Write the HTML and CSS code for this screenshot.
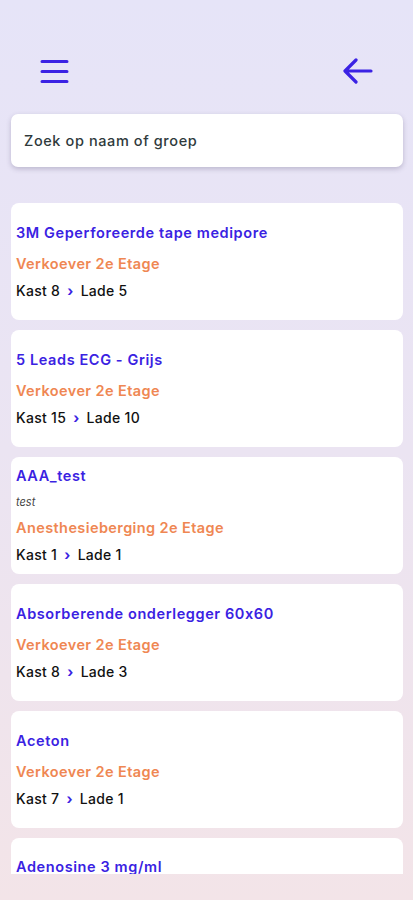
FILE: index.html
```html
<!DOCTYPE html>
<html lang="nl">
<head>
    <meta charset="UTF-8">
    <meta name="viewport" content="width=device-width, initial-scale=1.0">
    <title>Materialen</title>
    <link rel="stylesheet" href="styles.css">
</head>
<body>

    <!-- Top bar -->
    <header class="top-bar">
        <button class="icon-btn" aria-label="Menu">
            <svg width="29" height="25" viewBox="0 0 29 25">
                <path d="M2 2.5h25M2 12.5h25M2 22.5h25" stroke="#3b22e4" stroke-width="3" stroke-linecap="round" fill="none"/>
            </svg>
        </button>
        <button class="icon-btn" aria-label="Terug">
            <svg width="30" height="26" viewBox="0 0 30 26">
                <path d="M28 13H3M13 2L2 13l11 11" stroke="#3b22e4" stroke-width="3.2" stroke-linecap="round" stroke-linejoin="round" fill="none"/>
            </svg>
        </button>
    </header>

    <div class="search-box">Zoek op naam of groep</div>

    <main class="item-list">
        <div class="item-card">
            <p class="item-name">3M Geperforeerde tape medipore</p>
            <p class="item-desc empty"></p>
            <p class="item-place">Verkoever 2e Etage</p>
            <p class="item-loc">Kast 8 <span class="chev">&rsaquo;</span> Lade 5</p>
        </div>
        <div class="item-card">
            <p class="item-name">5 Leads ECG - Grijs</p>
            <p class="item-desc empty"></p>
            <p class="item-place">Verkoever 2e Etage</p>
            <p class="item-loc">Kast 15 <span class="chev">&rsaquo;</span> Lade 10</p>
        </div>
        <div class="item-card">
            <p class="item-name">AAA_test</p>
            <p class="item-desc">test</p>
            <p class="item-place">Anesthesieberging 2e Etage</p>
            <p class="item-loc">Kast 1 <span class="chev">&rsaquo;</span> Lade 1</p>
        </div>
        <div class="item-card">
            <p class="item-name">Absorberende onderlegger 60x60</p>
            <p class="item-desc empty"></p>
            <p class="item-place">Verkoever 2e Etage</p>
            <p class="item-loc">Kast 8 <span class="chev">&rsaquo;</span> Lade 3</p>
        </div>
        <div class="item-card">
            <p class="item-name">Aceton</p>
            <p class="item-desc empty"></p>
            <p class="item-place">Verkoever 2e Etage</p>
            <p class="item-loc">Kast 7 <span class="chev">&rsaquo;</span> Lade 1</p>
        </div>
        <!-- last card is cut off by the bottom of the list -->
        <div class="item-card partial">
            <p class="item-name">Adenosine 3 mg/ml</p>
        </div>
    </main>

</body>
</html>
```

FILE: styles.css
```css
html, body {
    height: 100%;
}

body {
    margin: 0;
    overflow: hidden;
    font-family: Inter, "Noto Sans", sans-serif;
    font-feature-settings: "calt" 0;
    background: linear-gradient(180deg, #e6e4f8 0%, #ebe4f2 50%, #f3e4e8 100%);
}

.top-bar {
    display: flex;
    justify-content: space-between;
    align-items: center;
    padding: 58px 40px 0 40px;
    height: 26px;
}

.icon-btn {
    background: none;
    border: none;
    padding: 0;
    display: flex;
}

.search-box {
    margin: 30px 10px 0 11px;
    height: 53px;
    background: #fff;
    border-radius: 7px;
    box-shadow: 0 2px 5px rgba(60, 50, 90, 0.25);
    display: flex;
    align-items: center;
    padding-left: 13px;
    font-size: 14.5px;
    font-weight: 500;
    letter-spacing: 0.6px;
    color: #2f3a3c;
}

.item-list {
    display: flex;
    flex-direction: column;
    gap: 10px;
    margin: 36px 10px 0 11px;
    height: 671px;
    overflow: hidden;
}

.item-card {
    flex-shrink: 0;
    background: #fff;
    border-radius: 8px;
    height: 117px;
    padding: 0 5px;
    display: flex;
    flex-direction: column;
    justify-content: center;
}

.item-card.partial {
    justify-content: flex-start;
    padding-top: 16px;
    box-sizing: border-box;
}

.item-card p {
    margin: 0;
}

.item-name {
    color: #3a22e2;
    font-size: 14.5px;
    font-weight: 600;
    letter-spacing: 0.6px;
    line-height: 26px;
}

.item-desc {
    color: #444;
    font-size: 11px;
    font-style: italic;
    line-height: 26px;
}

.item-desc.empty {
    height: 5px;
}

.item-place {
    color: #ef8753;
    font-size: 14.5px;
    font-weight: 600;
    letter-spacing: 0.4px;
    line-height: 26px;
}

.item-loc {
    color: #111;
    font-size: 14px;
    font-weight: 500;
    letter-spacing: 0.3px;
    line-height: 27px;
}

.chev {
    color: #3a22e2;
    font-weight: 700;
    margin: 0 3px;
}
```
